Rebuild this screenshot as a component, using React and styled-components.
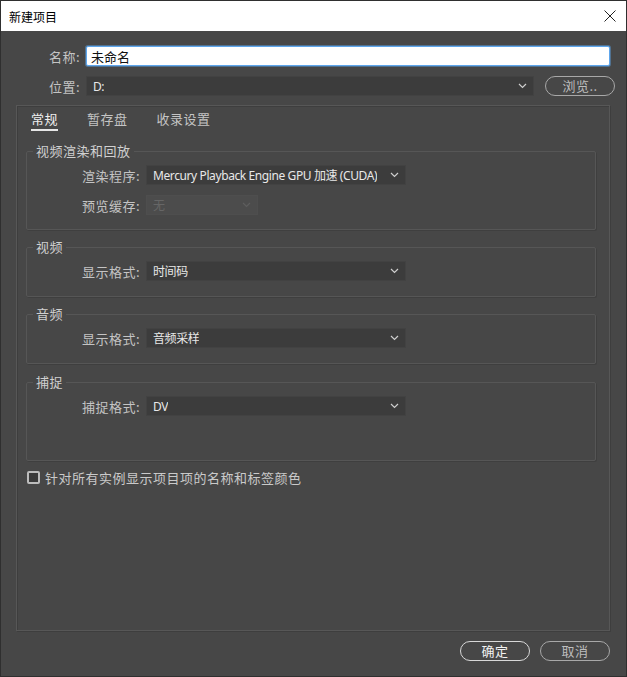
import React from 'react'
import styled, { createGlobalStyle } from 'styled-components';

const GlobalStyle = createGlobalStyle`
    html, body {
        margin: 0;
        padding: 0;
        background: #474747;
    }
    * {
        box-sizing: border-box;
    }
`;

const Janela = styled.div`
    width: 627px;
    height: 677px;
    border: 1px solid #2f2f2f;
    background: #474747;
    display: flex;
    flex-direction: column;
    font-family: "Noto Sans CJK SC", "Noto Sans", sans-serif;
    color: #cfcfcf;
`;

const BarraTitulo = styled.div`
    height: 30px;
    background: #ffffff;
    display: flex;
    align-items: center;
    justify-content: space-between;
    padding: 0 10px 0 8px;
    font-size: 12px;
    color: #000;
`;

const Corpo = styled.div`
    flex: 1;
    display: flex;
    flex-direction: column;
    padding: 15px 16px 0 15px;
`;

const LinhaForm = styled.div`
    display: grid;
    grid-template-columns: 64px 1fr ${({ $botao }) => ($botao ? '70px' : '')};
    column-gap: 6px;
    align-items: center;
    margin-top: ${({ $topo }) => $topo || 0}px;
`;

const Rotulo = styled.span`
    text-align: right;
    font-size: 13px;
    letter-spacing: 0.5px;
    color: #c4c4c4;
    white-space: nowrap;
`;

const CampoTexto = styled.input`
    height: 20px;
    width: 100%;
    border: 1px solid #5ea6ec;
    box-shadow: 0 0 0 1px rgba(94, 166, 236, 0.45);
    border-radius: 2px;
    background: #fff;
    padding: 0 4px;
    font-family: "Noto Sans CJK SC", "Noto Sans", sans-serif;
    font-size: 13px;
    color: #111;
    outline: none;
`;

const CaixaSelect = styled.div`
    height: 20px;
    width: ${({ $largura }) => ($largura ? `${$largura}px` : '100%')};
    background: ${({ $desativado }) => ($desativado ? '#4c4c4c' : '#3c3c3c')};
    border: 1px solid ${({ $desativado }) => ($desativado ? '#4e4e4e' : '#424242')};
    display: flex;
    align-items: center;
    justify-content: space-between;
    gap: 4px;
    padding: 0 6px 0 6px;
    font-family: "Noto Sans", "Noto Sans CJK SC", sans-serif;
    font-size: 12px;
    letter-spacing: -0.4px;
    color: ${({ $desativado }) => ($desativado ? '#666' : '#e8e8e8')};
    white-space: nowrap;

    span {
        min-width: 0;
        overflow: hidden;
    }

    svg {
        flex-shrink: 0;
    }
`;

const BotaoPilula = styled.button`
    height: 20px;
    width: 70px;
    border-radius: 10px;
    border: 1px solid ${({ $padrao }) => ($padrao ? '#d8d8d8' : '#a8a8a8')};
    background: transparent;
    color: ${({ $padrao }) => ($padrao ? '#f2f2f2' : '#bdbdbd')};
    font-family: "Noto Sans CJK SC", sans-serif;
    font-size: 13px;
    letter-spacing: 0.5px;
    padding: 0;
    line-height: 18px;
    margin-left: ${({ $afastado }) => ($afastado ? '5px' : '0')};
`;

const Painel = styled.div`
    flex: 1;
    margin-top: 9px;
    border: 1px solid #575757;
    box-shadow: inset 1px 1px 0 #3e3e3e, 1px 1px 0 #3e3e3e;
    padding: 0 13px 0 9px;
    display: flex;
    flex-direction: column;
`;

const Abas = styled.div`
    display: flex;
    gap: 29px;
    padding-left: 5px;
    margin-top: 4px;
`;

const Aba = styled.div`
    font-size: 13px;
    letter-spacing: 0.5px;
    line-height: 17px;
    padding-bottom: 2px;
    border-bottom: 2px solid ${({ $ativa }) => ($ativa ? '#e6e6e6' : 'transparent')};
    color: ${({ $ativa }) => ($ativa ? '#f0f0f0' : '#c4c4c4')};
`;

const Grupo = styled.fieldset`
    margin: ${({ $topo }) => $topo}px 0 0 0;
    min-width: 0;
    border: 1px solid #565656;
    border-radius: 2px;
    box-shadow: 1px 1px 0 #3f3f3f;
    padding: 6px 0 ${({ $baixo }) => $baixo}px 0;
    display: flex;
    flex-direction: column;
    gap: 10px;
`;

const Legenda = styled.legend`
    margin-left: 6px;
    padding: 0 3px;
    font-size: 13px;
    letter-spacing: 0.5px;
    line-height: 16px;
    color: #d0d0d0;
`;

const LinhaGrupo = styled.div`
    display: grid;
    grid-template-columns: 113px auto;
    column-gap: 6px;
    align-items: center;
    justify-content: start;
`;

const LinhaCheck = styled.label`
    display: flex;
    align-items: center;
    gap: 5px;
    margin: 7px 0 0 1px;
    font-size: 13px;
    letter-spacing: 0.5px;
    color: #cacaca;
`;

const Quadrado = styled.span`
    width: 13px;
    height: 13px;
    border: 2px solid #bcbcbc;
    border-radius: 2px;
    background: #3a3a3a;
`;

const Rodape = styled.div`
    display: flex;
    justify-content: flex-end;
    gap: 10px;
    padding: 10px 0 15px 0;
`;

const Seta = ({ cor = '#cfcfcf' }) => (
    <svg width="9" height="6" viewBox="0 0 9 6">
        <polyline points="1,1 4.5,4.5 8,1" fill="none" stroke={cor} strokeWidth="1.2" />
    </svg>
);

const Fechar = () => (
    <svg width="12" height="12" viewBox="0 0 12 12">
        <path d="M0.5 0.5 L11.5 11.5 M11.5 0.5 L0.5 11.5" stroke="#222" strokeWidth="1" />
    </svg>
);

const Select = ({ valor, largura, desativado }) => (
    <CaixaSelect $largura={largura} $desativado={desativado}>
        <span>{valor}</span>
        <Seta cor={desativado ? '#5e5e5e' : '#cfcfcf'} />
    </CaixaSelect>
);

const App = () => {
    return (
        <>
            <GlobalStyle />
            <Janela>
                <BarraTitulo>
                    <span>新建项目</span>
                    <Fechar />
                </BarraTitulo>
                <Corpo>
                    <LinhaForm>
                        <Rotulo>名称:</Rotulo>
                        <CampoTexto defaultValue="未命名" />
                    </LinhaForm>
                    <LinhaForm $botao $topo={10}>
                        <Rotulo>位置:</Rotulo>
                        <Select valor="D:" />
                        <BotaoPilula $afastado>浏览..</BotaoPilula>
                    </LinhaForm>

                    <Painel>
                        <Abas>
                            <Aba $ativa>常规</Aba>
                            <Aba>暂存盘</Aba>
                            <Aba>收录设置</Aba>
                        </Abas>

                        <Grupo $topo={12} $baixo={14}>
                            <Legenda>视频渲染和回放</Legenda>
                            <LinhaGrupo>
                                <Rotulo>渲染程序:</Rotulo>
                                <Select valor="Mercury Playback Engine GPU 加速 (CUDA)" largura={260} />
                            </LinhaGrupo>
                            <LinhaGrupo>
                                <Rotulo>预览缓存:</Rotulo>
                                <Select valor="无" largura={112} desativado />
                            </LinhaGrupo>
                        </Grupo>

                        <Grupo $topo={9} $baixo={15}>
                            <Legenda>视频</Legenda>
                            <LinhaGrupo>
                                <Rotulo>显示格式:</Rotulo>
                                <Select valor="时间码" largura={260} />
                            </LinhaGrupo>
                        </Grupo>

                        <Grupo $topo={9} $baixo={15}>
                            <Legenda>音频</Legenda>
                            <LinhaGrupo>
                                <Rotulo>显示格式:</Rotulo>
                                <Select valor="音频采样" largura={260} />
                            </LinhaGrupo>
                        </Grupo>

                        <Grupo $topo={10} $baixo={44}>
                            <Legenda>捕捉</Legenda>
                            <LinhaGrupo>
                                <Rotulo>捕捉格式:</Rotulo>
                                <Select valor="DV" largura={260} />
                            </LinhaGrupo>
                        </Grupo>

                        <LinhaCheck>
                            <Quadrado />
                            针对所有实例显示项目项的名称和标签颜色
                        </LinhaCheck>
                    </Painel>

                    <Rodape>
                        <BotaoPilula $padrao>确定</BotaoPilula>
                        <BotaoPilula>取消</BotaoPilula>
                    </Rodape>
                </Corpo>
            </Janela>
        </>
    )
}

export default App
